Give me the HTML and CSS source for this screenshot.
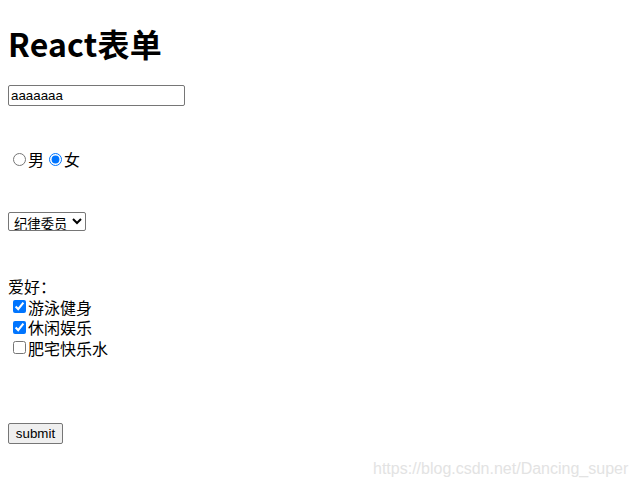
FILE: index.html
```html
<!DOCTYPE html>
<html lang="zh">
<head>
<meta charset="utf-8">
<title>React表单</title>
<link rel="stylesheet" href="styles.css">
</head>
<body>
<div class="page">
  <h1 class="title">React表单</h1>
  <form class="form">
    <div class="row row-text">
      <input class="text-input" type="text" value="aaaaaaa">
    </div>
    <div class="row row-radio">
      <label class="opt"><input class="radio" type="radio" name="sex">男</label>
      <label class="opt"><input class="radio" type="radio" name="sex" checked>女</label>
    </div>
    <div class="row row-select">
      <select class="select">
        <option>纪律委员</option>
        <option>班长</option>
        <option>学习委员</option>
      </select>
    </div>
    <div class="hobbies">
      <div class="line">爱好：</div>
      <label class="line opt"><input class="check" type="checkbox" checked>游泳健身</label>
      <label class="line opt"><input class="check" type="checkbox" checked>休闲娱乐</label>
      <label class="line opt"><input class="check" type="checkbox">肥宅快乐水</label>
    </div>
    <div class="row row-submit">
      <input class="submit" type="submit" value="submit">
    </div>
  </form>
</div>
<div class="watermark">https://blog.csdn.net/Dancing_super</div>
</body>
</html>
```
FILE: styles.css
```css
html, body {
  margin: 0;
  padding: 0;
  background: #ffffff;
}
body {
  width: 636px;
  height: 484px;
  position: relative;
  overflow: hidden;
  font-family: "Noto Sans CJK SC", "Liberation Sans", sans-serif;
  font-size: 16px;
  color: #000;
}
.page {
  padding: 0 8px;
}
.title {
  margin: 0;
  padding-top: 20px;
  height: 46px;
  line-height: 46px;
  font-size: 32px;
  font-weight: bold;
  letter-spacing: 0.2px;
}
.form {
  display: flex;
  flex-direction: column;
  align-items: flex-start;
}
.row {
  display: flex;
  align-items: center;
}
.row-text {
  margin-top: 19px;
}
.text-input {
  box-sizing: border-box;
  width: 177px;
  height: 21px;
  margin: 0;
  padding: 1px 2px;
  border: 1px solid #767676;
  border-radius: 2px;
  font-family: "Liberation Sans", Arial, sans-serif;
  font-size: 13.33px;
  color: #000;
}
.row-radio {
  margin-top: 42px;
  height: 22px;
  line-height: 22px;
}
.opt {
  display: flex;
  align-items: center;
}
.radio {
  width: 13px;
  height: 13px;
  margin: 0 2px 0 5px;
  accent-color: #0075ff;
}
.row-select {
  margin-top: 42px;
}
.select {
  box-sizing: border-box;
  width: 78px;
  height: 19px;
  margin: 0;
  padding: 0 0 0 1px;
  border: 1px solid #767676;
  border-radius: 2px;
  background: #fff;
  font-family: "Noto Sans CJK SC", sans-serif;
  font-size: 13.33px;
  color: #000;
}
.hobbies {
  margin-top: 45px;
  display: flex;
  flex-direction: column;
}
.line {
  height: 20.5px;
  line-height: 20.5px;
}
.check {
  width: 13px;
  height: 13px;
  margin: 0 2px 0 5px;
  accent-color: #0075ff;
}
.row-submit {
  margin-top: 65px;
}
.submit {
  box-sizing: border-box;
  width: 55px;
  height: 21px;
  margin: 0;
  padding: 0;
  border: 1px solid #767676;
  border-radius: 2px;
  background: #efefef;
  font-family: "Liberation Sans", Arial, sans-serif;
  font-size: 13.33px;
  color: #000;
}
.watermark {
  position: absolute;
  left: 373px;
  top: 460px;
  font-family: "Liberation Sans", Arial, sans-serif;
  font-size: 16px;
  color: #e3e3e3;
  white-space: nowrap;
}
```
